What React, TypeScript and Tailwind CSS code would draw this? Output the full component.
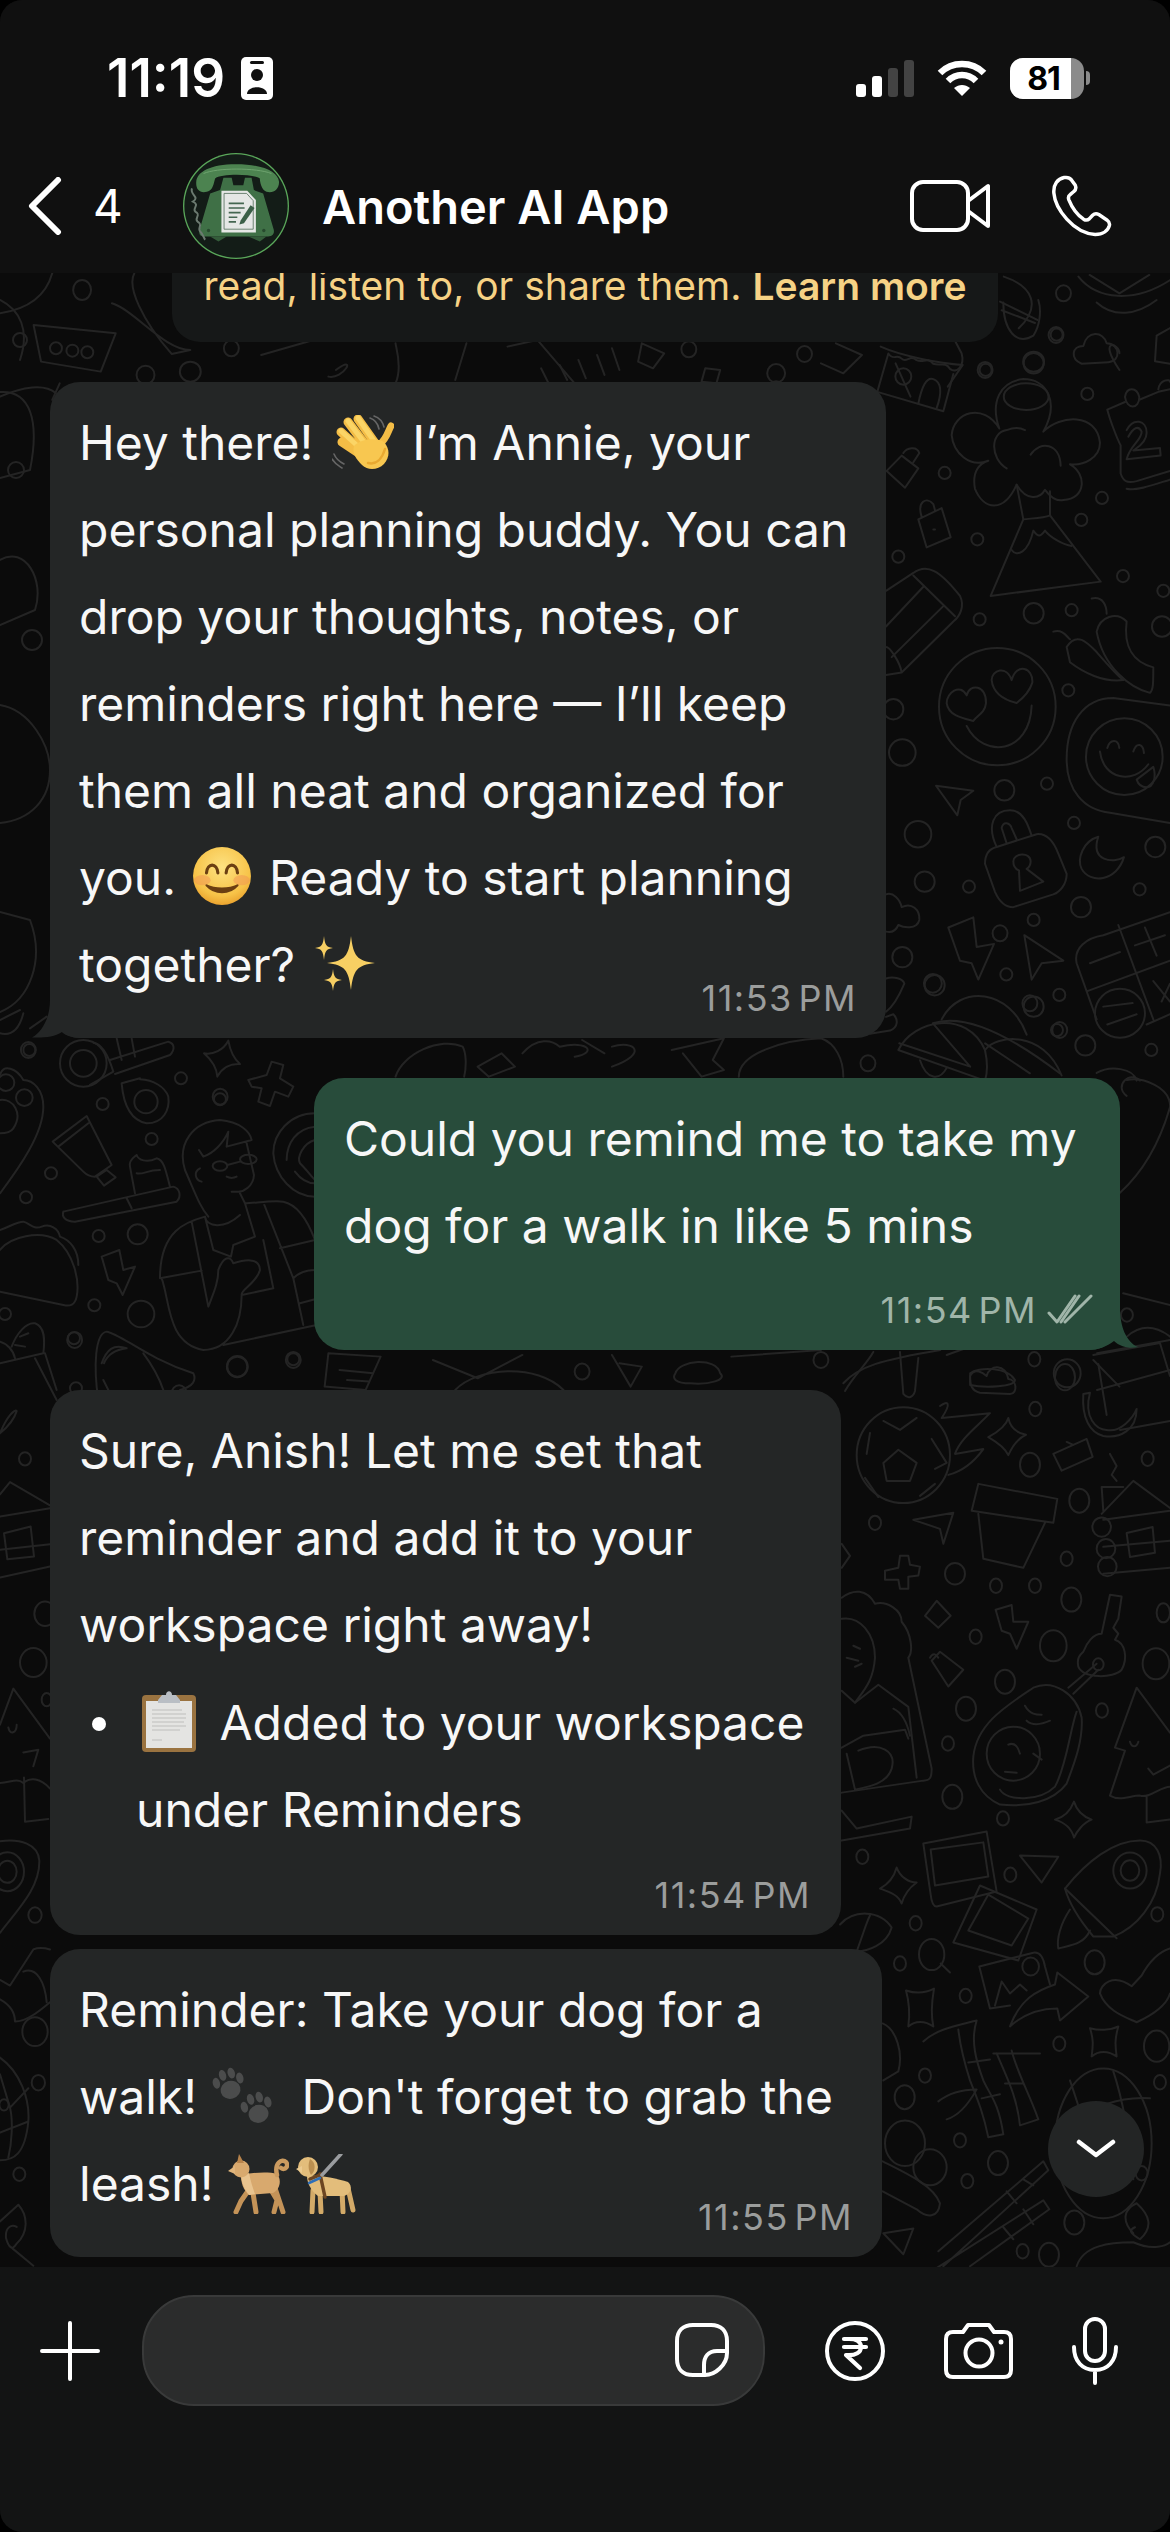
import React from "react";

type Group = { t: string; p: string[]; o: number[][] };

const groups: Group[] = [
  {
    t: "translate(870 300) scale(0.3333 0.5102)",
    o: [[560,68,18,12],[347,137,18,12],[491,124,30,20],[652,184,18,12],[224,339,18,12],[696,388,18,12],[634,431,18,12],[322,469,18,12],[85,503,18,12],[759,541,18,12],[880,570,18,12],[329,626,18,12],[491,614,30,20],[605,608,18,12],[876,640,30,20],[595,765,18,12],[70,802,30,20],[97,887,40,26],[403,961,30,20],[531,948,18,12],[144,1047,40,26],[612,1025,18,12],[856,1072,30,20],[164,1140,30,20],[297,1150,18,12],[809,1155,18,12],[633,1190,30,20],[491,1215,18,12],[97,1288,30,20],[194,1343,30,20],[409,1322,18,12],[568,1362,18,12],[491,1385,30,20],[561,1431,18,12],[646,1461,30,20],[844,1470,18,12],[100,150,24,16],[382,797,175,115],[763,895,115,75],[750,1398,75,48]],
    p: [
      "M22 180 L55 105 C70 120 80 105 95 115 C110 125 120 105 140 118 C160 125 170 110 190 125 C210 130 225 120 240 135 C260 145 285 130 275 105 L235 55",
      "M22 180 L220 218 L250 145","M145 203 C155 170 170 150 190 155 C210 160 220 175 200 212",
      "M400 5 C400 60 440 90 490 70 C510 50 515 20 505 0 M395 20 L495 45",
      "M680 5 C730 35 800 30 860 0",
      "M635 125 C600 115 605 90 640 90 C650 60 700 60 710 85 C750 85 755 120 715 122 Z",
      "M712 215 L765 200 M810 195 L865 180 L900 175 M712 215 C720 235 740 270 752 285 L752 340 C760 355 770 360 800 355 L900 335 M770 370 C800 375 860 360 900 352",
      "M765 190 C770 170 800 170 808 190 C808 215 770 215 765 190 M865 175 C870 155 900 155 900 160",
      "M770 255 C790 230 830 235 830 260 C830 280 800 290 790 295 L870 290 L872 305 L770 312 C780 285 815 275 815 258 C805 245 790 250 775 268",
      "M860 70 L855 120 L900 125 M860 70 L900 55",
      "M440 362 C400 420 340 410 315 370 C305 335 330 320 355 315 C300 330 250 300 245 265 C250 220 340 200 388 252 C360 200 390 160 460 155 C530 155 570 200 520 258 C570 225 680 220 690 280 C690 310 640 325 600 322 C650 340 650 390 580 392 C560 395 540 385 525 372 C510 390 470 395 440 362",
      "M362 580 L460 430 C480 428 520 428 540 422 L692 552 Z","M425 490 C440 505 475 495 490 452 C505 465 510 465 525 452 C540 465 580 480 605 482","M440 362 L460 430 M540 375 L540 422","M410 330 C360 310 360 260 410 255 C430 250 450 250 465 255 M482 303 C510 275 570 280 572 325",
      "M50 335 L95 305 L145 330 L105 368 Z M100 300 C110 290 140 285 148 300 L130 318",
      "M145 430 L215 408 L242 465 L170 485 Z M155 425 C140 395 170 385 190 400 L195 412","M190 450 L195 450",
      "M48 570 L130 535 C170 515 210 530 270 580 C285 600 270 620 250 630 L95 730 L48 735 M130 540 L255 620 M48 640 L160 562 M65 700 L220 600 M48 680 C60 680 90 710 95 730",
      "M230 790 C230 770 270 750 290 775 C300 750 350 755 348 790 C345 810 320 815 310 825 C280 820 235 815 230 790Z","M365 745 C365 725 410 715 425 745 C440 710 490 720 487 750 C480 765 460 780 440 790 C410 785 370 775 365 745Z","M290 835 C340 900 480 890 485 795",
      "M680 650 C690 620 740 610 770 630 C760 680 790 710 850 720 C850 750 850 765 840 770 C780 760 700 720 680 650 Z","M590 680 C620 650 650 670 680 690 C720 720 750 740 760 745 C700 750 640 730 600 710 Z","M665 585 C700 580 710 600 710 615 M550 650 C580 645 590 660 600 665",
      "M900 795 L730 780 C640 780 590 830 590 900 C590 960 640 1000 720 1005 L900 1025","M690 885 C700 940 790 950 835 910","M712 878 C720 860 745 860 748 878 M790 885 C800 865 820 870 822 888","M800 940 L850 915 C860 935 850 955 830 955 C815 955 805 950 800 940",
      "M198 952 L310 962 L272 980 L262 1010 Z",
      "M345 1105 C345 1085 360 1075 380 1072 L500 1047 C530 1045 550 1060 565 1085 L590 1125 C590 1145 570 1160 550 1165 L430 1190 C400 1190 385 1175 375 1160 Z","M380 1072 C350 1030 370 1000 420 1000 C460 1000 475 1030 485 1050 M410 1065 L395 1035 C400 1020 420 1025 425 1035 L440 1057","M430 1100 C430 1085 480 1080 482 1100 C482 1110 475 1113 470 1115 L520 1140 L450 1158 L447 1118 C435 1115 430 1110 430 1100",
      "M685 1052 C640 1060 620 1095 635 1115 C660 1145 740 1140 762 1092 C730 1105 660 1100 685 1052",
      "M235 1230 L310 1210 L320 1268 L372 1262 L325 1332 L305 1300 L270 1295 Z",
      "M463 1245 L580 1295 L515 1300 L485 1332 Z",
      "M900 1200 L700 1245 C650 1250 610 1270 620 1300 L680 1410 M650 1355 L900 1295 M745 1225 L850 1410 M660 1300 L750 1278 M795 1265 L885 1245 M825 1230 L860 1285 M850 1335 L900 1375 M875 1375 L900 1340 M830 1420 L900 1400","M700 1385 L788 1378 M712 1420 L800 1400",
      "M85 1470 C130 1410 290 1390 345 1470 C355 1500 350 1520 345 1530 L85 1470","M215 1410 C270 1340 420 1350 470 1440","M345 1470 C380 1440 520 1430 575 1520","M150 1490 C170 1530 210 1530 230 1505",
      "M48 1165 C70 1160 90 1175 95 1190 C125 1180 150 1195 148 1215 C140 1235 100 1230 85 1225 C75 1240 60 1240 48 1238","M48 1330 C70 1325 100 1330 103 1340 C90 1360 70 1385 48 1395 M48 1405 L70 1400 C85 1410 85 1425 60 1432 L0 1438",
      "M680 1515 C720 1500 790 1505 800 1530 M770 1560 C730 1540 780 1510 810 1530",
    ],
  },
  {
    t: "translate(820 1340) scale(0.3333 0.5995)",
    o: [[643,32,18,12],[735,62,30,22],[646,115,18,12],[630,208,30,20],[983,198,18,12],[165,305,18,12],[778,268,30,20],[405,390,30,18],[528,410,18,12],[645,410,18,12],[740,365,18,12],[754,433,30,20],[467,495,18,12],[700,510,40,26],[1008,540,40,26],[1030,455,20,16],[555,570,30,20],[438,615,30,20],[846,618,18,12],[384,673,18,12],[397,762,30,20],[549,798,18,12],[127,862,18,12],[287,973,18,12],[571,892,18,12],[240,1040,18,12],[437,1094,18,12],[824,1038,30,20],[1012,958,18,12],[718,1174,18,12],[1010,1178,38,26],[315,1227,18,12],[1020,1238,18,12],[254,1263,30,20],[420,1335,18,12],[534,1373,30,20],[442,1403,18,12],[965,1390,18,12],[763,1472,30,20],[608,1520,18,12],[687,1526,30,20],[250,192,140,80],[845,312,28,16],[858,348,28,16],[862,378,28,16],[580,690,80,45],[835,541,16,10],[930,885,50,30],[930,885,28,17],[632,1045,25,15],[335,1025,38,26],[255,1340,60,38],[330,1380,50,30],[850,1340,145,125]],
    p: [
      "M75 85 C100 60 140 40 160 20 M240 20 L250 90 C265 100 280 95 285 85 L295 30 M380 25 L430 15",
      "M450 60 C465 45 490 55 500 60 C510 40 555 40 565 65 C590 65 595 90 570 90 L480 88 C455 85 450 75 450 60",
      "M790 90 L810 88 C790 130 830 150 860 150 C900 155 940 130 950 115 C950 150 900 165 850 160 C810 155 785 130 790 90",
      "M820 25 L1020 5 L1050 60 M835 40 L860 125 M900 150 L1050 135",
      "M190 205 L235 183 L290 205 L270 235 L200 235 Z","M190 135 L240 150 L290 130","M150 155 L140 190 M335 165 L380 205 L345 215","M135 230 L175 262 M300 260 L345 240","M360 110 C385 100 395 105 365 130 L510 122 C470 145 420 165 405 190 L490 182 C460 205 420 220 385 225",
      "M505 162 C545 150 560 140 565 130 C570 145 590 155 618 158 C590 165 575 180 565 192 C555 180 530 170 505 162Z",
      "M280 300 L400 288 L370 340 L360 315 Z",
      "M455 285 L475 240 L712 265 L700 305 Z M475 290 L490 365 L610 380 L675 305",
      "M700 190 L800 165 L818 195 L725 218 Z M740 170 L760 175",
      "M850 285 L845 245 L910 245 M845 290 L940 235 L1050 280 M850 300 L1050 285 M850 390 L1050 380 M850 345 L1050 335","M920 322 L998 312 L1005 355 L930 362 Z","M870 190 L890 210 L875 225 L890 235",
      "M195 385 L235 380 L240 360 L265 360 L270 375 L300 378 L295 393 L265 395 L265 415 L240 415 L235 400 L195 400 Z",
      "M315 460 L350 435 L392 460 L355 480 Z",
      "M527 450 L575 442 L580 470 L625 470 L590 515 L570 490 L545 485 Z",
      "M335 535 L360 520 L430 550 L385 578 Z M330 530 C340 520 350 525 355 530",
      "M65 430 C100 415 140 415 165 440 C200 435 245 450 245 470 C275 490 280 520 265 530 L335 715 C335 730 330 735 310 735 L65 755","M65 465 C120 460 165 490 165 530 C160 570 130 585 105 605 L65 585","M105 605 L175 575 L265 612 L290 730","M220 615 C240 620 260 635 270 660","M65 680 L130 660 L255 650 L265 665 M80 690 L105 750 M115 685 C180 670 230 685 215 715 C200 740 150 745 105 750","M65 785 L110 815 L275 795 L270 815 L65 835","M100 510 L120 515 M80 530 L115 535 M105 545 L125 540 M65 340 L90 360 L65 380",
      "M460 695 C470 640 560 610 640 580 C700 565 770 590 785 630 C790 670 760 710 740 740 C700 770 620 780 540 775 C480 760 455 730 460 695","M770 620 C750 650 740 710 705 745 C660 770 560 770 540 750","M745 580 L830 540 M760 590 L835 550","M615 610 C630 625 650 625 665 625 M620 635 C640 645 670 640 690 635 M565 675 C585 670 595 680 600 690 M555 720 L590 722 M640 690 L665 700",
      "M790 520 C800 505 820 490 845 490 L870 425 L905 428 L895 465 L880 480 L895 490 L885 500 C915 505 925 530 905 550 C880 565 790 565 775 545 C770 530 780 525 790 520",
      "M885 680 L950 580 L1050 655 M885 680 L915 685 L870 760 C900 770 930 760 960 760 C990 765 1020 745 1050 745 M980 760 L980 805 L1050 800 M930 670 C935 680 950 680 955 670 M985 715 L1000 725 L1050 710",
      "M705 800 C740 795 755 780 762 770 C770 785 790 795 815 800 C790 805 770 820 762 830 C755 815 735 805 705 800Z",
      "M180 915 C215 905 225 890 230 880 C240 895 265 905 290 905 C265 915 250 930 245 940 C235 925 205 920 180 915Z",
      "M310 840 L500 820 L530 920 L350 945 C340 945 335 940 332 925 Z M332 850 L490 838 L505 895 L345 910 Z",
      "M400 1005 L480 910 L650 950 L595 1035 Z M445 985 L505 925 L625 965 L575 1010 Z",
      "M600 860 L715 862 L665 905 Z",
      "M735 915 C800 870 880 835 960 835 C1010 835 1030 860 1020 890 C1010 940 950 980 880 995 L820 995 C790 975 750 945 735 915Z","M735 915 L890 998","M750 950 C720 975 710 1000 715 1015 C745 1010 790 1010 810 985",
      "M478 1045 L640 1022 C660 1020 670 1030 675 1045 L690 1075 M478 1045 L510 1115 L570 1110 M525 1110 L545 1070 L570 1090 L600 1075 L620 1085","M570 1145 C600 1100 650 1085 705 1075 L712 1055 L805 1095 L720 1135 L712 1115 C660 1115 610 1125 570 1145Z",
      "M1050 1015 C1020 1020 990 1035 965 1060 L935 1078 C880 1055 840 1075 840 1090 C860 1120 920 1130 950 1138 C1000 1125 1040 1110 1050 1090",
      "M258 1085 C285 1090 315 1090 342 1082 C335 1105 332 1125 340 1145 C315 1135 285 1135 265 1145 C270 1125 268 1105 258 1085Z",
      "M810 1148 C835 1152 870 1152 895 1145 C885 1165 885 1175 890 1195 C865 1185 835 1185 815 1195 C820 1175 820 1165 810 1148Z",
      "M310 1170 C350 1150 400 1145 470 1135 C450 1170 470 1205 490 1235 C510 1260 535 1270 550 1325 L505 1330 C490 1290 475 1270 450 1235 C430 1200 420 1175 415 1150","M520 1190 L660 1190 M530 1190 C560 1230 590 1260 600 1310 L655 1300 C630 1260 590 1220 575 1185 M445 1205 L510 1200 M485 1265 L540 1258 M555 1240 L610 1240 M355 1270 C400 1250 450 1250 470 1250 C440 1280 410 1295 380 1300",
      "M715 1310 C790 1290 880 1260 990 1265 M750 1235 C790 1300 830 1380 870 1420 M880 1220 C910 1270 930 1340 940 1400",
      "M355 1520 L670 1370 L685 1385 L370 1545 M350 1548 L670 1435 L688 1450 L450 1545 M560 1420 L590 1440 M610 1400 L640 1410 M550 1480 L580 1500 M610 1450 L640 1475",
      "M770 1545 C790 1510 870 1505 940 1505 C1000 1520 1040 1510 1050 1505 M940 1490 C905 1470 910 1450 950 1440 C990 1460 1000 1480 960 1500 C930 1490 925 1485 945 1480",
      "M188 1370 C260 1390 340 1410 360 1440 C355 1465 320 1465 290 1450 L188 1420","M190 1490 L280 1482 L250 1525 Z","M188 1140 C230 1150 250 1190 235 1220 L190 1235","M60 975 C100 950 180 950 215 980 C200 1010 140 1020 110 1020 C130 990 140 970 150 960","M362 1040 L390 1055",
    ],
  },
  {
    t: "translate(0 1000) scale(0.3333 0.3333)",
    o: [[88,150,18,18],[543,235,18,18],[660,298,18,18],[308,312,18,18],[455,417,18,18],[153,520,18,18],[78,592,18,18],[296,708,18,18],[413,703,30,30],[283,916,18,18],[423,942,40,40],[222,1015,18,18],[15,942,18,18],[712,1100,30,30],[880,1078,18,18],[228,1165,18,18],[250,190,70,70],[250,190,40,40],[438,305,35,35],[660,498,22,14],[745,478,25,14],[18,248,25,25],[73,293,25,25]],
    p: [
      "M280 128 C300 130 320 150 340 215 L270 255 M330 180 L505 125 C525 130 525 150 510 165 L345 222 M350 115 L365 180 M395 115 L405 170 M365 250 L420 235 M365 250 C370 310 390 360 440 370 C490 370 510 330 505 290 C495 260 460 240 420 238",
      "M612 160 C640 165 670 150 685 122 C690 150 700 175 720 192 C690 190 665 205 652 230 C650 200 635 180 612 160Z",
      "M745 240 L800 225 L815 185 L850 195 L840 235 L880 260 L865 290 L825 275 L810 318 L775 305 L785 265 L755 260Z",
      "M158 425 L260 348 L335 495 L285 530 C270 530 260 525 250 515Z M175 440 L265 370 M290 530 L320 510 L347 532 L312 557 Z",
      "M190 635 L520 560 C540 565 545 590 530 605 L225 665 C195 665 185 650 190 635 M380 595 L395 625 M405 580 L390 500 C385 480 405 470 410 465 C415 480 440 490 470 475 C490 480 495 500 510 560 M410 520 C430 525 440 510 480 510",
      "M625 650 C600 620 590 590 555 510 C530 430 580 365 660 360 C720 365 750 395 755 420 L680 440 L685 395 C670 430 640 460 610 470 L597 450 M740 430 L762 525 C760 560 730 575 715 575 L695 575 M720 580 L735 610 C760 610 820 600 850 605 C900 615 930 680 945 720 L840 745 M735 610 L765 710 L700 735 L693 770 L640 750 L615 650 C620 680 670 690 720 645 M615 650 C560 665 480 690 480 835 L605 812 M575 665 L625 920 C640 880 655 850 655 810 C670 770 690 765 700 790 C730 780 780 770 780 810 C770 850 720 870 725 885 L820 865 L790 720 M793 615 L880 835 L910 975 M485 835 C510 900 500 1030 610 1050 C690 1050 725 970 725 885 M670 1035 L950 975 M880 835 C895 820 920 810 945 810 M900 910 L945 898",
      "M682 495 L720 485 M680 530 C690 535 700 535 710 530 M600 505 C580 515 585 540 605 545",
      "M945 340 C870 340 820 400 820 460 C825 530 880 590 945 590 M945 380 C890 385 860 430 860 480 M885 515 C900 535 920 550 945 550 M945 420 C910 430 890 470 900 490 C920 510 935 530 945 540",
      "M0 750 C30 710 120 690 170 720 C220 760 240 840 230 890 C225 915 210 920 190 915 L0 875 M0 690 C30 680 50 665 70 665 C90 670 100 690 125 680 C150 670 175 685 180 710 C210 720 235 750 235 795",
      "M305 770 L358 750 L370 810 L405 800 L368 885 L350 850 L325 840Z",
      "M0 1025 C20 1030 40 1050 45 1075 M35 1040 C50 1000 80 965 105 970 C135 980 135 1020 130 1060 L0 1090 M105 1075 L170 1200 M135 1060 L170 1170 M60 1010 L85 1000 M45 1035 L75 1040",
      "M295 1200 C280 1100 285 1000 320 995 C360 1000 440 1075 580 1120 C590 1140 580 1160 540 1170 M305 1090 C320 1050 340 1030 380 1045 C340 1050 320 1070 312 1090 M340 1200 L310 1140 M430 1060 C460 1100 480 1140 490 1170",
      "M0 580 C60 500 130 400 130 320 C130 270 100 240 70 240 C50 205 10 190 0 225 M0 300 C40 295 70 340 40 385 C30 400 10 400 0 400",
      "M0 100 C40 110 60 80 70 40 M0 60 L60 30 M90 85 L140 50",
    ],
  },
  {
    t: "scale(0.7463 0.3333)",
    o: [[110,870,12,30],[75,1045,8,18],[97,1052,8,18],[117,1057,8,18],[310,1045,10,24],[195,1125,12,28],[255,1115,14,30],[923,1048,10,24],[1078,1062,10,24],[1040,1120,12,28],[1320,1110,10,24],[1385,1085,14,30],[1415,1005,10,24],[1425,880,10,24],[1375,1190,30,40],[1040,1170,12,26],[1165,1430,14,30]],
    p: [
      "M0 940 C30 930 60 900 70 820","M45 975 L155 1000 L135 1115 L55 1085 Z","M150 910 C180 930 220 1050 255 1050 L230 1062 C190 960 170 860 180 820",
      "M350 1065 L420 1020 M530 1150 C540 1100 530 1040 530 1030 M625 1030 L610 1140 M680 1040 L720 1020 L770 1150","M725 1105 L735 1150 M750 1095 L760 1140 M775 1080 L785 1135 M800 1065 L810 1125 M820 1045 L830 1110",
      "M860 1030 L890 1060 L875 1105 L855 1085 Z M945 1105 L965 1110 L960 1150 L940 1145 Z",
      "M1120 1030 L1155 1065 L1130 1120 L1100 1090 M1180 1040 C1210 1070 1260 1090 1290 1095 L1270 1160 M1200 1090 L1220 1190","M450 1110 C480 1060 460 1140 440 1130",
      "M1345 830 C1385 860 1395 920 1365 985 M1340 905 L1390 960 M1445 830 C1470 900 1520 910 1568 840 M1460 825 L1500 880 L1540 825",
      "M0 1190 C30 1160 60 1150 75 1180 M80 1150 L70 1200 M1500 1110 C1470 1010 1500 1030 1500 1060",
    ],
  },
  {
    t: "translate(0 920) scale(0.7463 0.3333)",
    o: [[295,530,10,24],[1163,430,10,24],[1340,40,10,24],[1250,190,12,28],[1420,330,10,24],[1380,250,10,24],[38,390,10,24],[780,1355,10,24],[1100,1320,10,24],[1430,1360,18,42],[318,1340,14,32],[393,1320,10,24],[1510,1185,8,20],[100,1260,10,24],[240,1420,10,24]],
    p: [
      "M530 470 C540 400 590 350 620 380 C625 400 625 440 622 470 M640 440 L672 400 L690 440 L655 470 Z","M700 400 C720 350 740 360 750 380 C790 360 800 400 770 410 M780 360 L810 400 M820 380 C850 360 870 400 820 440","M900 390 L970 355 L955 420 L970 450 L940 470 L915 400","M990 470 C990 400 1050 360 1100 355 C1120 370 1130 420 1130 470","M1205 370 L1300 440 L1250 310 C1290 280 1350 340 1420 460 M1320 370 L1380 460",
      "M1510 480 C1530 470 1568 500 1568 560 C1550 700 1520 780 1500 820","M1505 1120 L1568 1155 M1510 1250 C1530 1210 1550 1220 1568 1250",
      "M580 1320 L640 1375 L700 1305 M610 1410 C640 1340 720 1330 755 1410 M820 1305 L845 1400 L860 1340 L830 1330","M905 1360 C910 1320 960 1310 965 1360 C975 1380 950 1395 925 1390 C905 1390 900 1375 905 1360","M1130 1390 C1150 1340 1180 1320 1260 1290 M1300 1360 C1310 1340 1350 1340 1360 1380 C1360 1400 1320 1405 1300 1395 Z M980 1310 L1100 1290 M440 1300 L510 1310 L490 1410 L435 1400 Z M455 1350 L500 1360 M465 1380 L495 1385",
      "M1470 1300 L1568 1260 M1465 1320 L1500 1400 M1568 1350 L1470 1410",
    ],
  },
  {
    t: "translate(0 1400) scale(0.3333 0.555)",
    o: [[75,106,18,12],[100,473,40,26],[135,385,32,22],[140,540,15,12],[105,928,20,14],[105,1138,38,26],[115,1230,20,14],[58,1395,18,12],[22,850,50,35],[22,850,28,20],[12,1270,14,10]],
    p: [
      "M0 60 C20 30 45 15 50 20 C40 40 10 55 0 60","M0 170 L30 148 L150 190 M0 210 L150 195 M0 320 L150 300 M0 270 L150 260","M12 240 L92 228 L102 282 L22 287Z",
      "M0 585 L40 520 L150 610 M0 690 C30 690 50 680 70 690 C90 680 120 680 150 700 M72 680 L75 760 L145 755 M25 590 C30 605 50 600 50 585 M70 635 L115 630 L100 660",
      "M0 795 C60 790 115 800 118 830 C120 880 50 920 0 960","M0 1045 L30 1055 L100 990 C120 985 150 990 150 990 M70 1030 C110 1020 135 1050 140 1085 M0 1080 C30 1090 45 1105 45 1120 M45 1120 C80 1120 120 1100 150 1085",
      "M0 1185 C60 1210 90 1260 85 1300 C75 1360 40 1370 0 1370 M0 1215 L30 1275 L85 1240 M0 1320 L85 1300 M30 1275 C40 1300 35 1340 25 1365",
      "M0 1480 L55 1450 C85 1470 85 1500 50 1520 C35 1535 25 1525 18 1510 C15 1490 35 1485 50 1490 M30 1525 L100 1560",
    ],
  },
  {
    t: "",
    o: [[16,470,8,8],[32,640,10,10],[20,340,7,7]],
    p: [
      "M0 705 C30 710 50 745 50 770 C50 800 30 820 0 823","M0 392 C30 390 40 420 30 470 L0 478","M0 912 L30 920 C45 960 30 1000 0 1012","M0 560 C25 545 45 580 35 610 L0 625","M0 300 C20 310 30 330 20 360",
    ],
  },
];

function Doodles() {
  return (
    <svg className="absolute inset-0" width="1170" height="1994" viewBox="0 273 1170 1994" fill="none" stroke="#242424" strokeLinecap="round" strokeLinejoin="round">
      {groups.map((g, i) => (
        <g key={i} transform={g.t || undefined}>
          {g.p.map((d, j) => (
            <path key={j} d={d} strokeWidth="2" vectorEffect="non-scaling-stroke" />
          ))}
          {g.o.map((c, j) => (
            <ellipse key={j} cx={c[0]} cy={c[1]} rx={c[2]} ry={c[3]} strokeWidth="2" vectorEffect="non-scaling-stroke" />
          ))}
        </g>
      ))}
    </svg>
  );
}

function Avatar() {
  return (
    <svg width="106" height="106" viewBox="68 38 320 320" className="shrink-0">
      <defs>
        <clipPath id="av"><circle cx="228" cy="198" r="160" /></clipPath>
      </defs>
      <circle cx="228" cy="198" r="160" fill="#5aa75a" />
      <circle cx="228" cy="198" r="156" fill="#131c17" />
      <g clipPath="url(#av)">
        <path d="M108 125 C110 95 150 72 228 72 C310 72 355 95 358 125 C358 150 340 160 320 155 C305 150 300 125 300 115 C280 100 180 100 165 115 C160 130 160 150 140 155 C120 160 106 150 108 125Z" fill="#4c8350" />
        <path d="M130 100 C170 82 290 82 335 100" stroke="#6fa470" strokeWidth="3" fill="none" />
        <path d="M180 150 L190 113 L215 113 L220 135 L250 135 L255 113 L275 113 L282 150 L310 160 L342 270 C345 285 335 290 320 290 L135 290 C120 290 115 285 118 270 L150 160Z" fill="#3f7046" />
        <path d="M150 290 L175 305 L200 290Z M265 290 L300 305 L320 290Z" fill="#345c3a" />
        <path d="M95 145 C88 165 120 170 98 185 C120 195 95 205 105 215 C125 225 100 235 112 245 C130 255 110 265 120 275 C130 285 130 295 135 300" stroke="#6b7a70" strokeWidth="6" fill="none" />
        <path d="M184 152 L262 152 L288 180 L288 278 L184 278Z" fill="#e5e7e5" />
        <path d="M192 160 L260 160 L280 182 L280 268 L192 268Z" fill="none" stroke="#55705c" strokeWidth="2.5" />
        <path d="M206 190 L252 190 M206 204 L254 204 M206 218 L242 218 M206 232 L232 232 M206 246 L228 246" stroke="#446650" strokeWidth="5" />
        <path d="M242 242 L272 196 L284 204 L252 250 L238 254Z" fill="#3b5f47" />
        <circle cx="145" cy="272" r="5" fill="#274a2e" /><circle cx="312" cy="272" r="5" fill="#274a2e" />
      </g>
    </svg>
  );
}

function Wave() {
  return (
    <svg width="62" height="56" viewBox="0 0 62 56" className="inline-block align-[-11px] ml-[5px] mr-[5px]" fill="none" strokeLinecap="round">
      <path d="M38 3 C44 5 46 9 47 14 M42 1 C48 3 51 8 52 12" stroke="#666" strokeWidth="1.6" />
      <path d="M2 39 C4 44 8 47 12 49 M0 44 C3 49 7 51 10 53" stroke="#666" strokeWidth="1.6" />
      <path d="M9 17 L30 36 M10 27 L28 39 M16 7 L35 32 M26 4 L43 28" stroke="#f4bd46" strokeWidth="9" />
      <path d="M9 16 L29 34 M16 6 L34 30 M26 3 L42 26" stroke="#fbd566" strokeWidth="5" />
      <path d="M59 11 C56 16 55 24 47 30" stroke="#f4bd46" strokeWidth="7" />
      <path d="M22 31 C28 24 44 22 52 27 C58 34 58 42 52 49 C46 55 36 56 30 50 C24 44 20 38 22 31Z" fill="#f8c750" stroke="none" />
      <path d="M36 48 C44 50 50 44 53 34" stroke="#e9a930" strokeWidth="2.5" />
    </svg>
  );
}

function Smile() {
  return (
    <svg width="60" height="58" viewBox="0 0 58 56" className="inline-block align-[-10px] ml-[2px] mr-[4px]">
      <defs>
        <radialGradient id="sm" cx="50%" cy="35%" r="70%"><stop offset="0" stopColor="#fde282" /><stop offset="0.7" stopColor="#f7c348" /><stop offset="1" stopColor="#e79a28" /></radialGradient>
      </defs>
      <circle cx="29" cy="28" r="28" fill="url(#sm)" />
      <ellipse cx="10" cy="32" rx="8" ry="5" fill="#ef8f55" opacity=".45" /><ellipse cx="48" cy="32" rx="8" ry="5" fill="#ef8f55" opacity=".45" />
      <path d="M14 25 C15 15 24 15 25 25 M33 25 C34 15 43 15 44 25" stroke="#6b3f12" strokeWidth="3" fill="none" strokeLinecap="round" />
      <path d="M14 37 C22 46 36 46 44 37 C36 41 22 41 14 37Z" fill="#6b3f12" stroke="#6b3f12" strokeWidth="2" strokeLinejoin="round" />
    </svg>
  );
}

function Sparkles() {
  const star = (x: number, y: number, w: number, h: number) =>
    `M${x} ${y - h} C${x + w * 0.1} ${y - h * 0.25} ${x + w * 0.25} ${y - h * 0.08} ${x + w} ${y} C${x + w * 0.25} ${y + h * 0.08} ${x + w * 0.1} ${y + h * 0.25} ${x} ${y + h} C${x - w * 0.1} ${y + h * 0.25} ${x - w * 0.25} ${y + h * 0.08} ${x - w} ${y} C${x - w * 0.25} ${y - h * 0.08} ${x - w * 0.1} ${y - h * 0.25} ${x} ${y - h}Z`;
  return (
    <svg width="60" height="56" viewBox="0 0 60 56" className="inline-block align-[-10px] ml-[6px]" fill="#f7cf63">
      <path d={star(36, 27, 24, 27)} />
      <path d={star(9, 12, 9, 12)} />
      <path d={star(18, 44, 9, 11)} />
    </svg>
  );
}

function Clipboard() {
  return (
    <svg width="54" height="62" viewBox="0 0 54 62" className="inline-block align-[-12px] ml-[6px] mr-[10px]">
      <rect x="0" y="5" width="54" height="57" rx="4" fill="#9a7340" />
      <rect x="4" y="11" width="46" height="47" fill="#e4e4e2" />
      <path d="M10 20 L40 20 M10 24 L44 24 M10 28 L44 28 M10 32 L42 32 M10 36 L44 36 M10 40 L38 40 M10 50 L20 50" stroke="#bdbdbb" strokeWidth="1.2" />
      <path d="M16 10 L20 5 L24 5 C24 0 30 0 30 5 L34 5 L38 10 L38 13 L16 13Z" fill="#b9bec4" />
    </svg>
  );
}

function Paws() {
  const paw = (x: number, y: number) => (
    <g transform={`translate(${x} ${y}) rotate(-15)`} fill="#4b4c4c">
      <ellipse cx="0" cy="6" rx="10" ry="9" />
      <ellipse cx="-12" cy="-4" rx="3.6" ry="5.5" />
      <ellipse cx="-4" cy="-10" rx="3.6" ry="5.5" />
      <ellipse cx="5" cy="-10" rx="3.6" ry="5.5" />
      <ellipse cx="12" cy="-3" rx="3.6" ry="5.5" />
    </g>
  );
  return (
    <svg width="62" height="58" viewBox="0 0 62 58" className="inline-block align-[-11px] mr-[2px]">
      {paw(18, 17)}
      {paw(46, 41)}
    </svg>
  );
}

function Dog() {
  return (
    <svg width="62" height="60" viewBox="0 0 62 60" className="inline-block align-[-13px] mr-[7px]" fill="none" strokeLinecap="round">
      <path d="M21 37 L14 47 L9 58 M26 39 L29 58 M44 36 L50 46 L47 58 M48 34 L56 58" stroke="#c49358" strokeWidth="5" />
      <path d="M14 22 C20 19 40 17 50 20 C55 26 53 35 46 39 L22 41 C16 36 14 28 14 22Z" fill="#d8a96e" />
      <path d="M14 22 C15 30 18 36 22 41 L28 40 C25 32 23 24 22 19Z" fill="#e9c48f" />
      <circle cx="14" cy="15" r="8.5" fill="#d8a96e" />
      <path d="M8 12 L1 17 L8 20Z" fill="#e0b57c" />
      <path d="M10 9 L12 0 L17 9Z" fill="#b8844c" />
      <path d="M50 21 C47 9 55 4 59 8 C62 12 58 17 54 14" stroke="#cb9b60" strokeWidth="4.5" />
    </svg>
  );
}

function GuideDog() {
  return (
    <svg width="62" height="60" viewBox="0 0 62 60" className="inline-block align-[-13px]" fill="none" strokeLinecap="round">
      <path d="M17 36 L16 58 M24 38 L25 58 M46 36 L47 58 M52 34 L57 56" stroke="#d3aa68" strokeWidth="5" />
      <path d="M11 22 C18 20 40 24 52 28 C57 32 55 40 48 42 L22 42 C14 36 11 28 11 22Z" fill="#e3bd7b" />
      <circle cx="12" cy="13" r="10" fill="#e3bd7b" />
      <path d="M6 12 L0 15 L6 19Z" fill="#eccb91" />
      <path d="M14 5 C20 8 20 17 15 21 C12 16 12 10 14 5Z" fill="#bb8f50" />
      <path d="M14 25 L26 20 M24 20 L29 43" stroke="#6c4522" strokeWidth="3.5" />
      <path d="M13 29 L24 24" stroke="#2f6fb8" strokeWidth="2.5" />
      <path d="M26 21 L45 0" stroke="#9a9c9f" strokeWidth="3.5" />
    </svg>
  );
}

function Bubble({ out, tail, className, children }: { out?: boolean; tail?: boolean; className: string; children: React.ReactNode }) {
  return (
    <div className={`relative rounded-[30px] pt-[17px] pb-[23px] ${out ? "bg-[#284c3b]" : "bg-[#242626]"} ${className}`}>
      {tail && !out && (
        <svg className="absolute left-[-18px] bottom-0" width="50" height="38" viewBox="0 0 50 38" fill="#242626">
          <path d="M18 0 C18 18 10 32 0 37.5 C12 38 22 37 30 32 C34 36 42 38 50 38 L50 0Z" />
        </svg>
      )}
      {tail && out && (
        <svg className="absolute right-[-18px] bottom-0" width="50" height="42" viewBox="0 0 50 42" fill="#284c3b">
          <path d="M32 0 C32 18 38 34 50 39 C42 41 32 39 26 33 C20 38 10 42 0 42 L0 0Z" />
        </svg>
      )}
      {children}
    </div>
  );
}

function Time({ t, className, out }: { t: string; className: string; out?: boolean }) {
  return (
    <div className={`flex justify-end items-start leading-[34px] text-[36px] tracking-[1.5px] [word-spacing:-6px] ${out ? "text-[#a0b5a9]" : "text-[#9b9d9c]"} ${className}`}>
      <span>{t}</span>
      {out && (
        <svg width="46" height="30" viewBox="0 0 46 30" fill="none" stroke="#a0b5a9" strokeWidth="3" className="ml-[10px] mt-[1px]" strokeLinecap="round" strokeLinejoin="round">
          <path d="M2 19 L10 28 L28 2 M18 28 L44 2 M14 28 L32 2" />
        </svg>
      )}
    </div>
  );
}

export default function App() {
  return (
    <div className="w-[1170px] h-[2532px] bg-black">
      <div className="w-full h-full flex flex-col overflow-hidden rounded-[22px] bg-[#0b0b0b] text-white" style={{ fontFamily: "Inter, 'Noto Sans', sans-serif" }}>
        {/* header */}
        <header className="h-[273px] shrink-0 bg-[#101010] relative z-20">
          <div className="h-[156px] flex items-center justify-between pl-[107px] pr-[80px]">
            <div className="flex items-center gap-[16px]">
              <span className="text-[53px] leading-none font-semibold">11:19</span>
              <svg width="32" height="43" viewBox="0 0 32 43">
                <rect width="32" height="43" rx="5" fill="#fff" />
                <rect x="9" y="4" width="14" height="3" rx="1.5" fill="#101010" />
                <circle cx="16" cy="18" r="6" fill="#101010" />
                <path d="M6 37 C6 28 26 28 26 37Z" fill="#101010" />
              </svg>
            </div>
            <div className="flex items-center">
              <svg width="58" height="37" viewBox="0 0 58 37">
                <rect x="0" y="24" width="10" height="13" rx="3" fill="#fff" />
                <rect x="16" y="16" width="10" height="21" rx="3" fill="#fff" />
                <rect x="32" y="8" width="10" height="29" rx="3" fill="#434343" />
                <rect x="48" y="0" width="10" height="37" rx="3" fill="#434343" />
              </svg>
              <svg width="50" height="37" viewBox="0 0 50 37" className="ml-[23px]" fill="none" stroke="#fff" strokeWidth="6.5">
                <path d="M3 13 C15 1 35 1 47 13" />
                <path d="M11 21 C19 13 31 13 39 21" />
                <path d="M25 36 L17 28 C22 24 28 24 33 28Z" fill="#fff" stroke="none" />
              </svg>
              <div className="ml-[23px] w-[74px] h-[41px] rounded-[13px] bg-[#8b8b8b] overflow-hidden flex">
                <div className="w-[61px] h-full bg-white text-black text-[32px] font-bold leading-[41px] text-center tracking-[-1px] pl-[6px]">81</div>
              </div>
              <div className="ml-[2px] w-[4px] h-[14px] rounded-r-full bg-[#8b8b8b]" />
            </div>
          </div>
          <div className="h-[100px] flex items-center pl-[28px] pr-[58px]">
            <svg width="34" height="58" viewBox="0 0 34 58" fill="none" stroke="#fff" strokeWidth="6" strokeLinecap="round" strokeLinejoin="round" className="shrink-0">
              <path d="M30 3 L4 29 L30 55" />
            </svg>
            <span className="ml-[31px] w-[90px] text-[46px] leading-none font-normal">4</span>
            <Avatar />
            <span className="ml-[33px] text-[47px] leading-none font-semibold">Another AI App</span>
            <div className="flex-1" />
            <svg width="80" height="54" viewBox="0 0 80 54" fill="none" stroke="#fff" strokeWidth="4" strokeLinejoin="round">
              <rect x="2" y="3" width="56" height="48" rx="11" />
              <path d="M58 22 L78 7 L78 47 L58 32" />
            </svg>
            <svg width="62" height="62" viewBox="0 0 24 24" fill="none" stroke="#fff" strokeWidth="1.35" strokeLinecap="round" strokeLinejoin="round" className="ml-[60px]">
              <path d="M5.5 1 C3 1.5 1.2 3.6 1.5 7 C2 13 9 22.5 17.5 23 C20.5 23 22.5 21.5 23 19.5 C23.2 18.6 22.8 18 22 17.4 L18.9 15.3 C18 14.8 17.2 14.9 16.5 15.6 L15.2 17 C14.5 17.6 13.8 17.6 13 17.1 C10.5 15.4 8.4 12.3 7.3 9.6 C7 8.8 7.1 8.1 7.8 7.6 L9.2 6.4 C10 5.8 10.2 5 9.8 4 L8.3 1.9 C7.6 1 6.6 0.8 5.5 1Z" />
            </svg>
          </div>
        </header>

        {/* chat */}
        <main className="relative flex-1 overflow-hidden text-[48px] leading-[87px] text-[#f7f7f7]">
          <Doodles />
          <div className="relative flex flex-col items-start">
            <div className="ml-[172px] w-[826px] h-[69px] bg-[#161818] rounded-b-[28px] text-[#f6d285] text-[39px] leading-[26px] text-center">
              read, listen to, or share them. <span className="font-semibold">Learn more</span>
            </div>

            <Bubble tail className="ml-[50px] mt-[40px] w-[836px] pl-[29px]">
              <div>
                Hey there! <Wave /> I’m Annie, your<br />
                personal planning buddy. You can<br />
                drop your thoughts, notes, or<br />
                reminders right here — I’ll keep<br />
                them all neat and organized for<br />
                you. <Smile /> Ready to start planning<br />
                together? <Sparkles />
              </div>
              <Time t="11:53 PM" className="-mt-[27px] pr-[29px]" />
            </Bubble>

            <Bubble out tail className="ml-[314px] mt-[40px] w-[806px] pl-[30px]">
              <div>
                Could you remind me to take my<br />
                dog for a walk in like 5 mins
              </div>
              <Time out t="11:54 PM" className="mt-[24px] pr-[27px]" />
            </Bubble>

            <Bubble className="ml-[50px] mt-[40px] w-[791px] pl-[29px]">
              <div>
                Sure, Anish! Let me set that<br />
                reminder and add it to your<br />
                workspace right away!
              </div>
              <div className="flex mt-[11px]">
                <span className="w-[57px] shrink-0 flex justify-start pl-[13px] pt-[38px]">
                  <span className="w-[14px] h-[14px] rounded-full bg-white" />
                </span>
                <div>
                  <Clipboard /> Added to your workspace<br />
                  under Reminders
                </div>
              </div>
              <Time t="11:54 PM" className="mt-[25px] pr-[30px]" />
            </Bubble>

            <Bubble className="ml-[50px] mt-[14px] w-[832px] pl-[29px]">
              <div>
                Reminder: Take your dog for a<br />
                walk! <Paws /> &nbsp;Don't forget to grab the<br />
                leash! <Dog /><GuideDog />
              </div>
              <Time t="11:55 PM" className="-mt-[27px] pr-[29px]" />
            </Bubble>
          </div>

          <button className="absolute left-[1048px] top-[1828px] w-[96px] h-[96px] rounded-full bg-[#232525] flex items-center justify-center">
            <svg width="40" height="20" viewBox="0 0 40 20" fill="none" stroke="#fff" strokeWidth="4.5" strokeLinecap="round" strokeLinejoin="round">
              <path d="M3 3 L20 16 L37 3" />
            </svg>
          </button>
        </main>

        {/* footer */}
        <footer className="h-[265px] shrink-0 bg-[#131414] pt-[28px] relative z-20">
          <div className="flex items-center h-[111px] pl-[40px]">
            <svg width="60" height="60" viewBox="0 0 60 60" stroke="#fff" strokeWidth="4" strokeLinecap="round" className="shrink-0">
              <path d="M30 2 L30 58 M2 30 L58 30" />
            </svg>
            <div className="ml-[42px] w-[623px] h-[111px] rounded-[52px] bg-[#2b2c2c] border-2 border-[#393a3a] flex items-center justify-end pr-[34px]">
              <svg width="54" height="55" viewBox="0 0 54 55" fill="none" stroke="#fff" strokeWidth="4" strokeLinecap="round" strokeLinejoin="round">
                <path d="M30 52 L18 52 C8 52 2 46 2 36 L2 18 C2 8 8 2 18 2 L36 2 C46 2 52 8 52 18 L52 30 C52 42 40 52 30 52Z" />
                <path d="M52 28 L42 28 C33 28 29 34 29 42 L29 52" />
              </svg>
            </div>
            <svg width="60" height="60" viewBox="0 0 60 60" fill="none" stroke="#fff" strokeWidth="4" strokeLinecap="round" strokeLinejoin="round" className="ml-[60px]">
              <circle cx="30" cy="30" r="28" />
              <path d="M19 18 L41 18 M19 26 L41 26 M24 18 C33 18 36 22 36 26 C36 31 31 35 21 34 L35 47" strokeWidth="4.2" />
            </svg>
            <svg width="69" height="56" viewBox="0 0 69 56" fill="none" stroke="#fff" strokeWidth="4" strokeLinejoin="round" className="ml-[59px]">
              <path d="M2 16 C2 11 5 9 9 9 L19 9 L24 2 L45 2 L50 9 L60 9 C64 9 67 11 67 16 L67 47 C67 52 64 54 60 54 L9 54 C5 54 2 52 2 47Z" />
              <circle cx="35" cy="30" r="13.5" />
              <circle cx="57" cy="19" r="2.5" fill="#fff" stroke="none" />
            </svg>
            <svg width="46" height="68" viewBox="0 0 46 68" fill="none" stroke="#fff" strokeWidth="4" strokeLinecap="round" className="ml-[59px]">
              <rect x="13" y="2" width="20" height="42" rx="10" />
              <path d="M2 30 C2 44 10 53 23 53 C36 53 44 44 44 30 M23 53 L23 66" />
            </svg>
          </div>
        </footer>
      </div>
    </div>
  );
}
